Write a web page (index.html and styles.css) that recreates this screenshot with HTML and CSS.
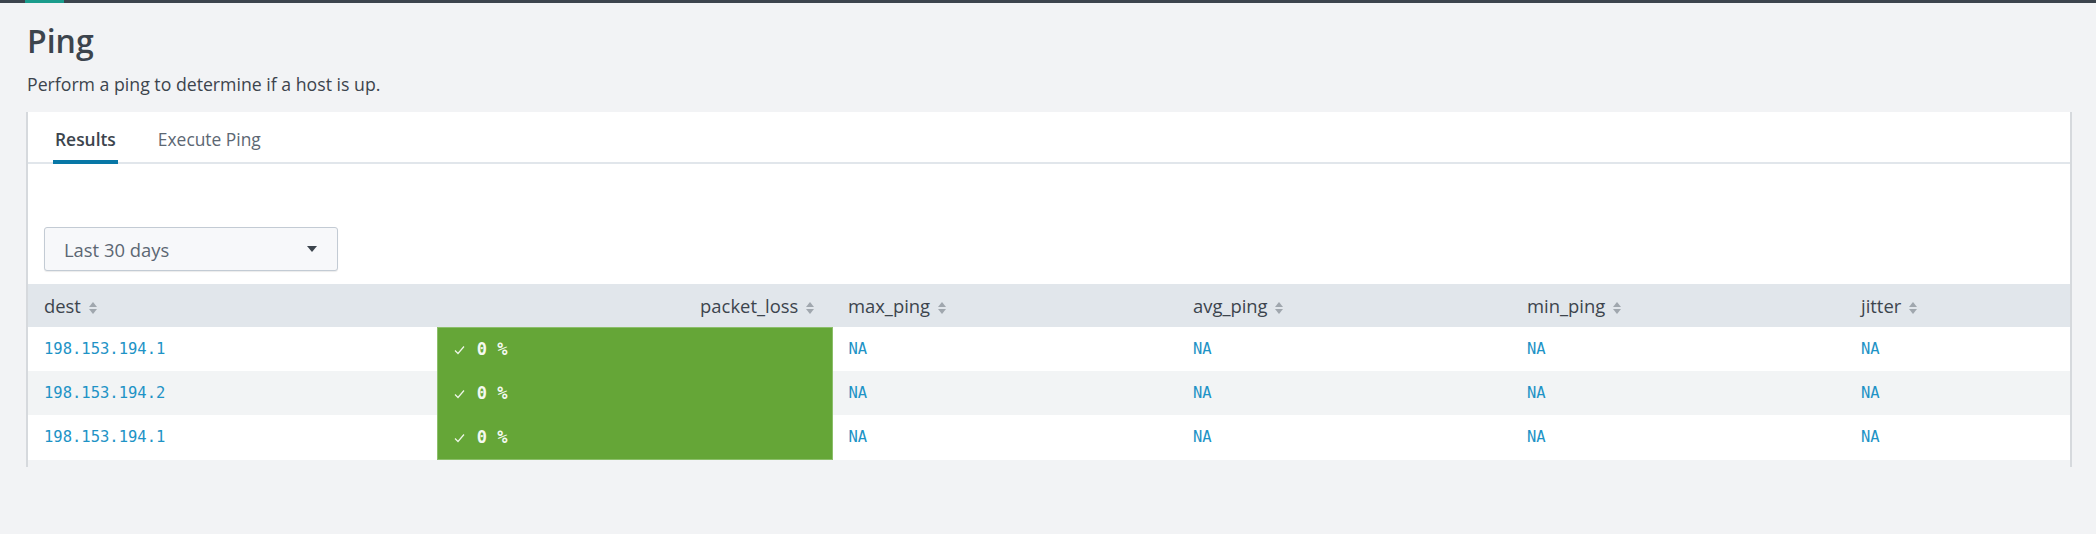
FILE: index.html
```html
<!DOCTYPE html>
<html lang="en">
<head>
<meta charset="utf-8">
<title>Ping</title>
<link rel="stylesheet" href="styles.css">
</head>
<body>
<div class="topbar"><div class="topbar-accent"></div></div>
<main class="page">
  <h1 class="title">Ping</h1>
  <p class="desc">Perform a ping to determine if a host is up.</p>
  <section class="panel">
    <nav class="tabs">
      <span class="tab active">Results</span>
      <span class="tab">Execute Ping</span>
    </nav>
    <div class="panel-body">
      <div class="dropdown">
        <span>Last 30 days</span>
        <svg class="caret" width="10" height="6" viewBox="0 0 10 6"><polygon points="0,0 10,0 5,6" fill="#3c444d"/></svg>
      </div>
    </div>
    <table class="results">
      <colgroup>
        <col class="c-dest"><col class="c-loss"><col class="c-max"><col class="c-avg"><col class="c-min"><col class="c-jit">
      </colgroup>
      <thead>
        <tr>
          <th>dest <svg class="sort" width="8" height="12" viewBox="0 0 8 12"><polygon points="0,5 4,0 8,5"/><polygon points="0,7 8,7 4,12"/></svg></th>
          <th class="right">packet_loss <svg class="sort" width="8" height="12" viewBox="0 0 8 12"><polygon points="0,5 4,0 8,5"/><polygon points="0,7 8,7 4,12"/></svg></th>
          <th>max_ping <svg class="sort" width="8" height="12" viewBox="0 0 8 12"><polygon points="0,5 4,0 8,5"/><polygon points="0,7 8,7 4,12"/></svg></th>
          <th>avg_ping <svg class="sort" width="8" height="12" viewBox="0 0 8 12"><polygon points="0,5 4,0 8,5"/><polygon points="0,7 8,7 4,12"/></svg></th>
          <th>min_ping <svg class="sort" width="8" height="12" viewBox="0 0 8 12"><polygon points="0,5 4,0 8,5"/><polygon points="0,7 8,7 4,12"/></svg></th>
          <th>jitter <svg class="sort" width="8" height="12" viewBox="0 0 8 12"><polygon points="0,5 4,0 8,5"/><polygon points="0,7 8,7 4,12"/></svg></th>
        </tr>
      </thead>
      <tbody>
        <tr>
          <td class="link">198.153.194.1</td>
          <td class="ok"><svg class="check" width="11" height="10" viewBox="0 0 11 10"><polyline points="1,5.5 4,8.5 10,1.5" fill="none" stroke="#eef6e8" stroke-width="1.2"/></svg> 0 %</td>
          <td class="link">NA</td><td class="link">NA</td><td class="link">NA</td><td class="link">NA</td>
        </tr>
        <tr class="striped">
          <td class="link">198.153.194.2</td>
          <td class="ok"><svg class="check" width="11" height="10" viewBox="0 0 11 10"><polyline points="1,5.5 4,8.5 10,1.5" fill="none" stroke="#eef6e8" stroke-width="1.2"/></svg> 0 %</td>
          <td class="link">NA</td><td class="link">NA</td><td class="link">NA</td><td class="link">NA</td>
        </tr>
        <tr>
          <td class="link">198.153.194.1</td>
          <td class="ok"><svg class="check" width="11" height="10" viewBox="0 0 11 10"><polyline points="1,5.5 4,8.5 10,1.5" fill="none" stroke="#eef6e8" stroke-width="1.2"/></svg> 0 %</td>
          <td class="link">NA</td><td class="link">NA</td><td class="link">NA</td><td class="link">NA</td>
        </tr>
      </tbody>
    </table>
    <div class="panel-foot"></div>
  </section>
</main>
</body>
</html>
```
FILE: styles.css
```css
* { box-sizing: border-box; }
html, body { margin: 0; padding: 0; }
body {
  background: #f2f3f5;
  font-family: "Open Sans", "Liberation Sans", sans-serif;
  color: #3c444d;
}
.topbar {
  height: 3px;
  background: #3c444d;
}
.topbar-accent {
  margin-left: 25px;
  width: 39px;
  height: 3px;
  background: #1a9c8c;
}
.page {
  padding: 0 24px 0 26px;
}
.title {
  margin: 19px 0 0 1px;
  font-size: 32px;
  line-height: 38px;
  font-weight: 600;
  color: #3c444d;
}
.desc {
  margin: 13px 0 0 1px;
  font-size: 17.7px;
  line-height: 22px;
  color: #3c444d;
}
.panel {
  margin-top: 17px;
  background: #fff;
  border-left: 2px solid #d6d9dd;
  border-right: 2px solid #d6d9dd;
}
.tabs {
  display: flex;
  gap: 38px;
  padding: 0 0 0 25px;
  height: 52px;
  border-bottom: 2px solid #e1e6eb;
}
.tab {
  display: flex;
  align-items: center;
  padding: 5px 2px 0;
  font-size: 17.4px;
  color: #5c6773;
  border-bottom: 4px solid transparent;
  margin-bottom: -2px;
}
.tab.active {
  color: #3c444d;
  font-weight: 600;
  border-bottom-color: #0877a6;
}
.panel-body {
  padding: 63px 0 13px 16px;
}
.dropdown {
  display: flex;
  align-items: center;
  justify-content: space-between;
  width: 294px;
  height: 44px;
  padding: 0 20px 0 19px;
  background: #f7f8fa;
  border: 1px solid #c3cbd4;
  border-radius: 3px;
  box-shadow: 0 1px 1px rgba(0, 0, 0, 0.08);
  font-size: 18.4px;
  color: #5c6773;
}
.results {
  width: 100%;
  table-layout: fixed;
  border-collapse: collapse;
}
.c-dest { width: 409px; }
.c-loss { width: 395px; }
.c-max { width: 345px; }
.c-avg { width: 334px; }
.c-min { width: 334px; }
.c-jit { width: 225px; }
.results th {
  height: 43px;
  padding: 0 16px;
  background: #e1e6eb;
  text-align: left;
  font-weight: 400;
  font-size: 18.4px;
  color: #3c444d;
  white-space: nowrap;
}
.results th.right {
  text-align: right;
  padding-right: 18px;
}
.sort {
  fill: #a0a7ae;
  margin-left: 3px;
  vertical-align: -1px;
}
.results td {
  height: 44px;
  padding: 0 16px;
  font-family: "DejaVu Sans Mono", "Liberation Mono", monospace;
  font-size: 15.5px;
}
.striped td { background: #f2f4f5; }
.results td.link { color: #1e93c6; }
.results td.ok {
  background: #65a637;
  border-left: 1px solid #8cbf6a;
  border-right: 1px solid #8cbf6a;
  color: #f4f9f0;
  font-weight: 700;
  font-size: 17px;
}
tbody tr:first-child td.ok { border-top: 1px solid #8cbf6a; }
tbody tr:last-child td.ok { border-bottom: 1px solid #8cbf6a; }
.check { vertical-align: 0; margin-right: 2px; }
.panel-foot {
  height: 7px;
  background: #f2f3f5;
}
```
